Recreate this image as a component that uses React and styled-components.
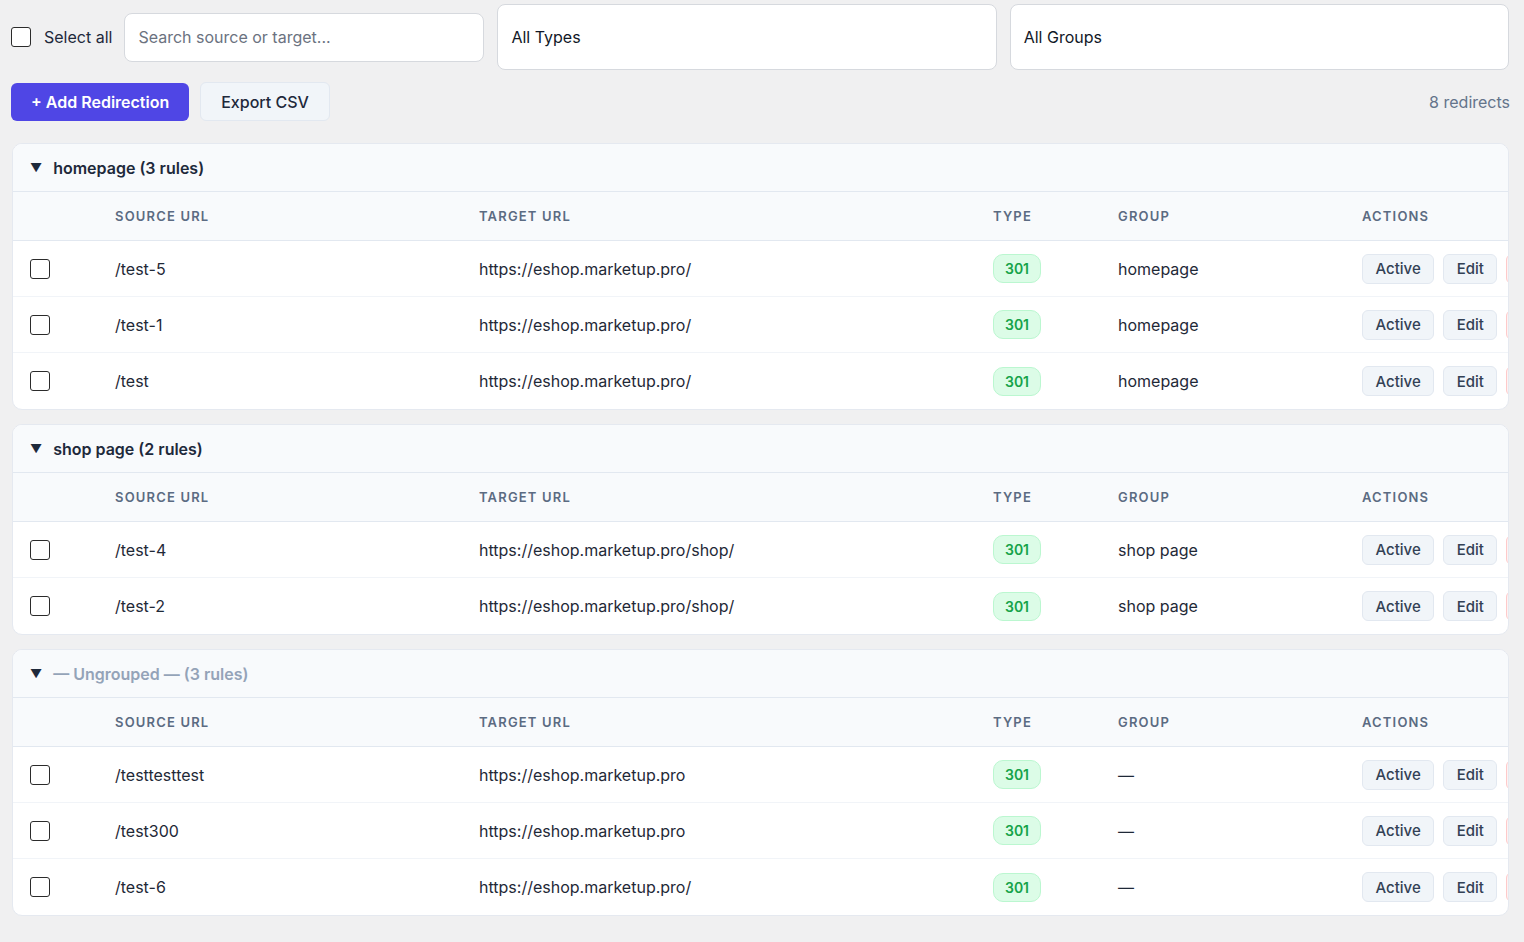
import React from 'react';
import styled, { createGlobalStyle } from 'styled-components';

const groups = [
	{
		name: 'homepage',
		rows: [
			{ source: '/test-5', target: 'https://eshop.marketup.pro/', group: 'homepage' },
			{ source: '/test-1', target: 'https://eshop.marketup.pro/', group: 'homepage' },
			{ source: '/test', target: 'https://eshop.marketup.pro/', group: 'homepage' },
		],
	},
	{
		name: 'shop page',
		rows: [
			{ source: '/test-4', target: 'https://eshop.marketup.pro/shop/', group: 'shop page' },
			{ source: '/test-2', target: 'https://eshop.marketup.pro/shop/', group: 'shop page' },
		],
	},
	{
		name: null,
		rows: [
			{ source: '/testtesttest', target: 'https://eshop.marketup.pro', group: null },
			{ source: '/test300', target: 'https://eshop.marketup.pro', group: null },
			{ source: '/test-6', target: 'https://eshop.marketup.pro/', group: null },
		],
	},
];

const App = () => {
	return (
		<Page>
			<GlobalStyle />
			<FilterBar>
				<SelectAll>
					<Box />
					Select all
				</SelectAll>
				<Search placeholder="Search source or target..." />
				<Select>All Types</Select>
				<Select>All Groups</Select>
			</FilterBar>
			<Toolbar>
				<PrimaryButton>+ Add Redirection</PrimaryButton>
				<SecondaryButton>Export CSV</SecondaryButton>
				<Count>8 redirects</Count>
			</Toolbar>
			<Groups>
				{groups.map((g, i) => (
					<GroupCard key={i}>
						<GroupHeader>
							<Caret>▼</Caret>
							<GroupTitle muted={!g.name}>
								{g.name ? `${g.name} (${g.rows.length} rules)` : `— Ungrouped — (${g.rows.length} rules)`}
							</GroupTitle>
						</GroupHeader>
						<HeadRow>
							<span />
							<HeadCell>Source URL</HeadCell>
							<HeadCell>Target URL</HeadCell>
							<HeadCell>Type</HeadCell>
							<HeadCell>Group</HeadCell>
							<HeadCell>Actions</HeadCell>
						</HeadRow>
						{g.rows.map((r, j) => (
							<Row key={j} last={j === g.rows.length - 1}>
								<CheckCell><Box /></CheckCell>
								<Cell>{r.source}</Cell>
								<Cell>{r.target}</Cell>
								<Cell><Badge>301</Badge></Cell>
								<Cell>{r.group || '—'}</Cell>
								<Actions>
									<ActionButton>Active</ActionButton>
									<ActionButton>Edit</ActionButton>
									<ActionButton danger>Delete</ActionButton>
								</Actions>
							</Row>
						))}
					</GroupCard>
				))}
			</Groups>
		</Page>
	);
}

const GlobalStyle = createGlobalStyle`
	body {
		margin: 0;
		background: #f0f0f1;
		font-family: Inter, "Noto Sans", sans-serif;
		color: #1e293b;
	}
`;

const Page = styled.div`
	padding: 4px 15px 27px 11px;
`;

const FilterBar = styled.div`
	display: flex;
	align-items: center;
	gap: 13px;
	height: 66px;
`;

const SelectAll = styled.label`
	display: flex;
	align-items: center;
	gap: 13px;
	font-size: 16px;
	color: #1e293b;
	white-space: nowrap;
`;

const Box = styled.span`
	display: inline-block;
	width: 20px;
	height: 20px;
	box-sizing: border-box;
	border: 1.5px solid #2b2b2b;
	border-radius: 3px;
	background: #fff;
	flex: none;
`;

const Search = styled.input`
	width: 360px;
	height: 49px;
	box-sizing: border-box;
	margin-left: -1px;
	padding: 0 13px;
	border: 1px solid #d6d9de;
	border-radius: 8px;
	background: #fff;
	font-family: inherit;
	font-size: 16px;
	outline: none;
	&::placeholder {
		color: #6b7280;
	}
`;

const Select = styled.div`
	flex: 1;
	height: 66px;
	box-sizing: border-box;
	display: flex;
	align-items: center;
	padding: 0 13px;
	border: 1px solid #d6d9de;
	border-radius: 8px;
	background: #fff;
	font-size: 16px;
	color: #111827;
`;

const Toolbar = styled.div`
	display: flex;
	align-items: center;
	gap: 11px;
	margin-top: 12px;
	height: 39px;
`;

const PrimaryButton = styled.button`
	height: 38px;
	padding: 0 20px;
	border: none;
	border-radius: 6px;
	background: #4f46e5;
	color: #fff;
	font-family: inherit;
	font-size: 16px;
	font-weight: 600;
`;

const SecondaryButton = styled.button`
	height: 39px;
	padding: 0 20px;
	border: 1px solid #e2e8f0;
	border-radius: 6px;
	background: #f1f5f9;
	color: #1e293b;
	font-family: inherit;
	font-size: 16px;
	font-weight: 500;
`;

const Count = styled.span`
	margin-left: auto;
	margin-right: -1px;
	font-size: 16px;
	color: #64748b;
`;

const Groups = styled.div`
	display: flex;
	flex-direction: column;
	gap: 14px;
	margin-top: 22px;
	margin-left: 1px;
`;

const GroupCard = styled.div`
	background: #fff;
	border: 1px solid #e5e9f0;
	border-radius: 10px;
	overflow: hidden;
`;

const GroupHeader = styled.div`
	display: flex;
	align-items: center;
	gap: 11px;
	height: 47px;
	padding-left: 17px;
	background: #f8fafc;
	border-bottom: 1px solid #e2e8f0;
`;

const Caret = styled.span`
	font-size: 12px;
	color: #1e293b;
`;

const GroupTitle = styled.span`
	font-size: 16px;
	font-weight: 600;
	color: ${p => (p.muted ? '#94a3b8' : '#1e293b')};
`;

const columns = '86px 364px 514px 125px 244px auto';

const HeadRow = styled.div`
	display: grid;
	grid-template-columns: ${columns};
	align-items: center;
	height: 48px;
	background: #f8fafc;
	border-bottom: 1px solid #e2e8f0;
`;

const HeadCell = styled.span`
	padding-left: 16px;
	font-size: 13px;
	font-weight: 600;
	letter-spacing: 0.09em;
	text-transform: uppercase;
	color: #5b6b82;
	white-space: nowrap;
`;

const Row = styled.div`
	display: grid;
	grid-template-columns: ${columns};
	align-items: center;
	height: ${p => (p.last ? '56px' : '55px')};
	border-bottom: ${p => (p.last ? 'none' : '1px solid #f1f4f8')};
`;

const CheckCell = styled.span`
	display: flex;
	padding-left: 17px;
`;

const Cell = styled.span`
	padding-left: 16px;
	font-size: 16px;
	color: #1f2937;
	white-space: nowrap;
`;

const Badge = styled.span`
	display: inline-flex;
	align-items: center;
	justify-content: center;
	width: 48px;
	height: 29px;
	box-sizing: border-box;
	border: 1px solid #bbf7d0;
	border-radius: 10px;
	background: #dcfce7;
	color: #16a34a;
	font-size: 14px;
	font-weight: 600;
`;

const Actions = styled.span`
	display: flex;
	gap: 9px;
	padding-left: 16px;
`;

const ActionButton = styled.button`
	height: 30px;
	padding: 0 12.5px;
	border: 1px solid ${p => (p.danger ? '#fecaca' : '#e2e8f0')};
	border-radius: 6px;
	background: ${p => (p.danger ? '#fef2f2' : '#f1f5f9')};
	color: ${p => (p.danger ? '#dc2626' : '#334155')};
	font-family: inherit;
	font-size: 15px;
	font-weight: 500;
	white-space: nowrap;
`;

export default App;
